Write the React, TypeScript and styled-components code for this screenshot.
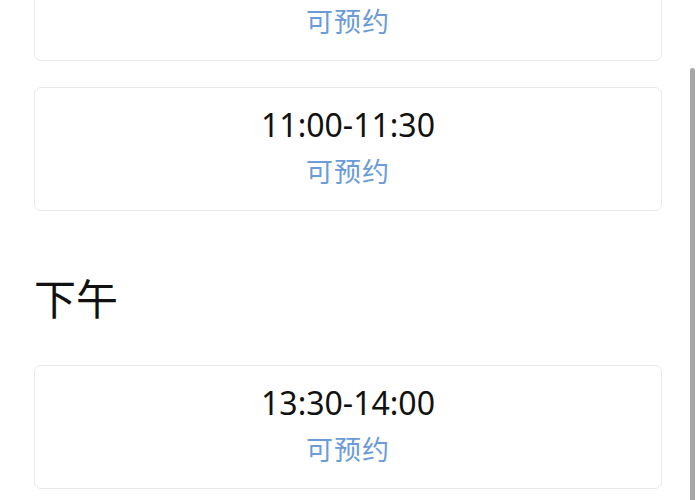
import React from 'react'
import { styled, createGlobalStyle } from 'styled-components'

const slots = {
  morning: ['10:30-11:00', '11:00-11:30'],
  afternoon: ['13:30-14:00'],
}

const App = () => {
  return (
    <>
      <GlobalStyle />
      <Page>
        <SlotList>
          {slots.morning.map(time => (
            <SlotCard key={time}>
              <SlotTime>{time}</SlotTime>
              <SlotState>可预约</SlotState>
            </SlotCard>
          ))}
        </SlotList>
        <SectionTitle>下午</SectionTitle>
        <SlotList>
          {slots.afternoon.map(time => (
            <SlotCard key={time}>
              <SlotTime>{time}</SlotTime>
              <SlotState>可预约</SlotState>
            </SlotCard>
          ))}
        </SlotList>
      </Page>
      <ScrollThumb />
    </>
  )
}

export default App

const GlobalStyle = createGlobalStyle`
  html, body {
    margin: 0;
    padding: 0;
    background: #ffffff;
    overflow: hidden;
  }
  body {
    font-family: "Noto Sans", "Noto Sans CJK SC", sans-serif;
    color: #111111;
  }
`;

const Page = styled.div`
  width: 700px;
  height: 500px;
  overflow: hidden;
  box-sizing: border-box;
  padding: 0 38px 0 34px;
`;

const SlotList = styled.div`
  display: flex;
  flex-direction: column;
  gap: 26px;

  &:first-child {
    margin-top: -63px;
  }
`;

const SlotCard = styled.div`
  height: 124px;
  box-sizing: border-box;
  border: 1.5px solid #e9e9e9;
  border-radius: 7px;
  display: flex;
  flex-direction: column;
  align-items: center;
  padding-top: 15px;
`;

const SlotTime = styled.div`
  font-size: 32px;
  line-height: 44px;
  color: #111111;
`;

const SlotState = styled.div`
  font-family: "Noto Sans CJK SC", sans-serif;
  font-size: 27px;
  line-height: 48px;
  color: #6b9bd8;
  letter-spacing: 1px;
`;

const SectionTitle = styled.div`
  font-family: "Noto Sans CJK SC", sans-serif;
  font-size: 42px;
  line-height: 60px;
  margin: 56px 0 38px 0;
  color: #111111;
`;

const ScrollThumb = styled.div`
  position: fixed;
  top: 68px;
  right: 5px;
  width: 5px;
  height: 440px;
  border-radius: 3px;
  background: #a6a6a6;
`;
